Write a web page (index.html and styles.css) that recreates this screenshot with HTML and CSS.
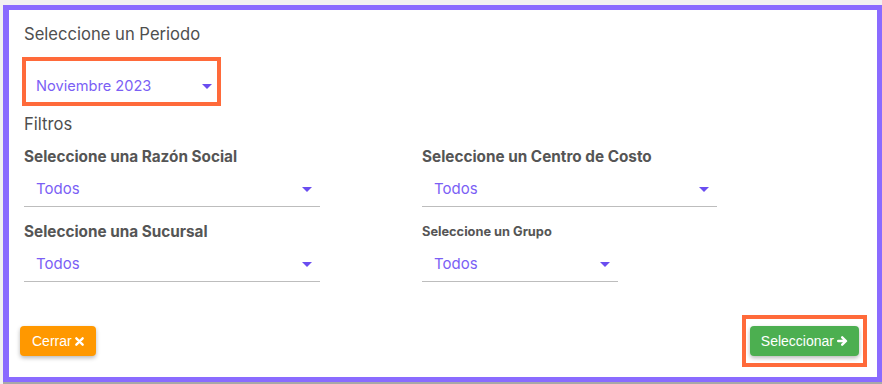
FILE: index.html
```html
<!DOCTYPE html>
<html lang="es">
<head>
<meta charset="utf-8">
<title>Seleccione un Periodo</title>
<link rel="stylesheet" href="styles.css">
</head>
<body>
<div class="page">
  <div class="modal">
    <div class="content">
      <h2 class="title">Seleccione un Periodo</h2>
      <div class="period">
        <span class="value period-value">Noviembre 2023</span>
        <span class="caret"></span>
      </div>
      <h2 class="title filters">Filtros</h2>
      <div class="grid">
        <div class="field">
          <div class="label">Seleccione una Razón Social</div>
          <div class="select w-left">
            <span class="value">Todos</span>
            <span class="caret"></span>
          </div>
        </div>
        <div class="field">
          <div class="label">Seleccione un Centro de Costo</div>
          <div class="select w-right">
            <span class="value">Todos</span>
            <span class="caret"></span>
          </div>
        </div>
        <div class="field">
          <div class="label">Seleccione una Sucursal</div>
          <div class="select w-left">
            <span class="value">Todos</span>
            <span class="caret"></span>
          </div>
        </div>
        <div class="field">
          <div class="label small">Seleccione un Grupo</div>
          <div class="select w-group">
            <span class="value">Todos</span>
            <span class="caret"></span>
          </div>
        </div>
      </div>
    </div>
    <div class="footer">
      <button class="btn btn-close">Cerrar
        <svg class="ico" width="9" height="9" viewBox="0 0 10 10"><path d="M1.5 1.5 L8.5 8.5 M8.5 1.5 L1.5 8.5" stroke="#fff" stroke-width="2.6" stroke-linecap="round"/></svg>
      </button>
      <div class="highlight">
        <button class="btn btn-ok">Seleccionar
          <svg class="ico" width="11" height="10" viewBox="0 0 11 10"><path d="M1.2 5 H8.6 M5.2 1.3 L9 5 L5.2 8.7" stroke="#fff" stroke-width="2.4" fill="none" stroke-linecap="round" stroke-linejoin="round"/></svg>
        </button>
      </div>
    </div>
  </div>
  <div class="strip"></div>
</div>
</body>
</html>
```
FILE: styles.css
```css
* { box-sizing: border-box; }
html, body { margin: 0; padding: 0; }
body {
  background: #f2f2f2;
  font-family: Inter, "Noto Sans", sans-serif;
  width: 882px;
  height: 384px;
  overflow: hidden;
}
.page {
  padding: 5px 0 0 3px;
}
.modal {
  width: 879px;
  background: #fff;
  border: 5px solid #8a6bff;
  border-left-width: 6px;
}
.content {
  padding: 14px 15px 0 15px;
}
.title {
  margin: 0;
  font-size: 16.6px;
  line-height: 20px;
  font-weight: 400;
  color: #4f4f4f;
}
.period {
  margin-top: 13px;
  width: 199px;
  margin-left: -2px;
  border: 4px solid #ff6a3a;
  padding: 15px 5px 6px 10px;
  display: flex;
  align-items: center;
  justify-content: space-between;
}
.value {
  font-size: 15px;
  line-height: 20px;
  color: #7b5ff5;
}
.period-value {
  font-size: 14.6px;
}
.caret {
  width: 0;
  height: 0;
  border-left: 5px solid transparent;
  border-right: 5px solid transparent;
  border-top: 5px solid #6a4df0;
}
.filters {
  margin-top: 8px;
}
.grid {
  margin-top: 14px;
  display: grid;
  grid-template-columns: 398px 1fr;
  row-gap: 16px;
}
.label {
  font-size: 15.3px;
  line-height: 18px;
  font-weight: 700;
  color: #555;
}
.label.small {
  font-size: 12.8px;
}
.select {
  padding: 13px 8px 7px 12px;
  border-bottom: 1px solid #bdbdbd;
  display: flex;
  align-items: center;
  justify-content: space-between;
}
.w-left { width: 296px; }
.w-right { width: 295px; }
.w-group { width: 196px; }
.footer {
  margin-top: 33px;
  padding: 0 10px 10px 11px;
  display: flex;
  align-items: center;
  justify-content: space-between;
}
.btn {
  height: 30px;
  border: none;
  border-radius: 4px;
  color: #fff;
  font-family: "Liberation Sans", Arial, sans-serif;
  font-size: 14px;
  display: flex;
  align-items: center;
  gap: 3px;
  padding: 0 12px;
  box-shadow: 0 2px 4px rgba(0,0,0,0.28);
}
.btn-close {
  background: #ff9800;
}
.btn-ok {
  background: #4caf50;
  padding: 0 11px;
}
.highlight {
  border: 4px solid #ff6a3a;
  padding: 7px 4px;
}
.ico { display: block; }
.strip {
  height: 2px;
  background: #a8a8a8;
}
```
